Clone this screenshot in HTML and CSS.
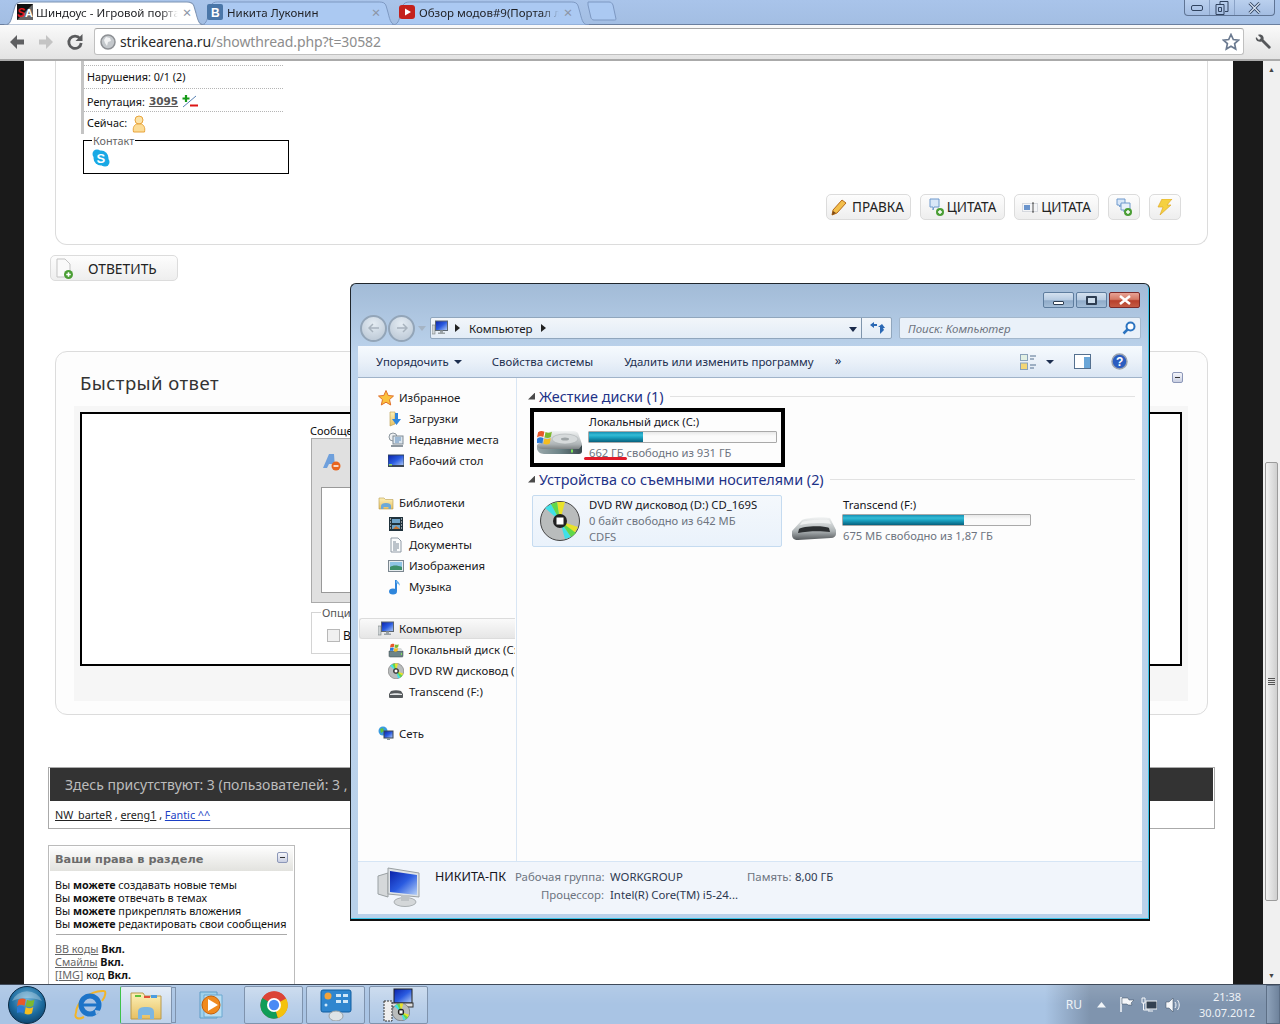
FILE: index.html
```html
<!DOCTYPE html>
<html lang="ru">
<head>
<meta charset="utf-8">
<title>Шиндоус - Игровой портал</title>
<link rel="stylesheet" href="styles.css">
</head>
<body>
<svg class="defs" aria-hidden="true">
  <defs>
    <linearGradient id="gSilver" x1="0" y1="0" x2="0" y2="1"><stop offset="0" stop-color="#f2f4f4"/><stop offset=".6" stop-color="#aeb4b6"/><stop offset="1" stop-color="#55595c"/></linearGradient>
    <linearGradient id="gBlue" x1="0" y1="0" x2="1" y2="1"><stop offset="0" stop-color="#0b22a8"/><stop offset=".5" stop-color="#2a5be0"/><stop offset="1" stop-color="#b6d0f7"/></linearGradient>
    <linearGradient id="gFolder" x1="0" y1="0" x2="0" y2="1"><stop offset="0" stop-color="#fdf1b8"/><stop offset="1" stop-color="#e6bf62"/></linearGradient>
    <linearGradient id="gHddSide" x1="0" y1="0" x2="1" y2="0"><stop offset="0" stop-color="#9aa8ab"/><stop offset=".5" stop-color="#6d8488"/><stop offset="1" stop-color="#39474b"/></linearGradient>
    <radialGradient id="gOrb" cx=".5" cy=".35" r=".7"><stop offset="0" stop-color="#6fb2d8"/><stop offset=".6" stop-color="#1d6c9f"/><stop offset="1" stop-color="#0c3e66"/></radialGradient>
    <symbol id="flagwin" viewBox="0 0 16 16">
      <path d="M1 4c2-1.500 4-1.500 6-.5l-1 5c-2-1-4-1-6 .5z" fill="#e8582a"/><path d="M8 3.800c2 1 4 1 6-.3l-1 5c-2 1.300-4 1.300-6 .3z" fill="#7cb82f"/><path d="M0 10c2-1.500 4-1.500 6-.5l-1 5c-2-1-4-1-6 .5z" fill="#2a7ad8"/><path d="M7 9.800c2 1 4 1 6-.3l-1 5c-2 1.300-4 1.300-6 .3z" fill="#f5bd1f"/>
    </symbol>
    <symbol id="hdd" viewBox="0 0 48 32">
      <path d="M2 19L14 6c1-1 2-1 4-1h21c2 0 3 1 4 2l4 11v6c0 2-1 3-3 3H9c-4 0-7-3-7-6z" fill="url(#gSilver)"/>
      <path d="M2 20c1 2 3 3 6 3h36l3-4v6c0 2-1 3-3 3H9c-4 0-7-3-7-6z" fill="url(#gHddSide)"/>
      <path d="M36 23.500h2v3h-2z" fill="#7fe35c"/>
      <ellipse cx="30" cy="13" rx="13" ry="5" fill="#d6dadb" stroke="#a2a8aa" stroke-width=".5"/>
      <ellipse cx="30" cy="13" rx="4" ry="1.500" fill="#9ea4a6"/>
      <use href="#flagwin" x="2" y="2" width="17" height="17"/>
    </symbol>
    <symbol id="usb" viewBox="0 0 48 28">
      <path d="M2 17L12 6c3-2 20-4 28-2l6 12v4c0 2-2 4-5 4L8 26c-4 0-6-2-6-5z" fill="url(#gSilver)"/>
      <path d="M9 15c2-3 25-4 30-1l1 4c-9-1-22-1-32 1z" fill="#2c2f31"/>
      <path d="M12 8c6-2 22-3 27-2l2 4c-6-2-25-1-31 1z" fill="#eef0f0"/>
    </symbol>
    <symbol id="cd" viewBox="0 0 40 40">
      <circle cx="20" cy="20" r="19.500" fill="#b9bcbc" stroke="#444"/>
      <path d="M20 20L17 1h8zM20 20L38 26l-4 7z" fill="#e8e22a"/>
      <path d="M20 20L5 7l6-4zM20 20L25 38l6-2z" fill="#3fe0e8"/>
      <path d="M20 20L11 3l6-2zM20 20L31 36l5-4z" fill="#61d84a"/>
      <circle cx="20" cy="20" r="7" fill="#222"/><rect x="16.500" y="16.500" width="7" height="7" fill="#fff"/>
    </symbol>
    <symbol id="pc" viewBox="0 0 16 16">
      <rect x="0" y="5" width="3" height="9" fill="#cfd4d6" stroke="#7a8083" stroke-width=".6"/>
      <rect x="3.500" y="1" width="12" height="9.500" fill="url(#gBlue)" stroke="#5c6670"/>
      <path d="M8 10.500h3v2h2v1.500H6v-1.500h2z" fill="#9aa2a6"/>
    </symbol>
    <symbol id="star" viewBox="0 0 16 16"><path d="M8 .5l2.200 5 5.300.5-4 3.600 1.200 5.400L8 12.200 3.300 15l1.200-5.400-4-3.600 5.300-.5z" fill="#fbc23e" stroke="#e0702a"/></symbol>
    <symbol id="folder" viewBox="0 0 16 16"><path d="M1 3h5l1.500 1.500H15V14H1z" fill="url(#gFolder)" stroke="#b99a4c" stroke-width=".6"/><path d="M3 14v-3c0-2 2-3 5-3s5 1 5 3v3h-2.500v-2h-5v2z" fill="#6aa8d8"/></symbol>
    <symbol id="plus" viewBox="0 0 8 8"><circle cx="4" cy="4" r="4" fill="#4b9e35"/><path d="M2 4h4M4 2v4" stroke="#fff" stroke-width="1.400"/></symbol>
  </defs>
</svg>

<div class="screen">
  <header class="tabstrip">
    <div class="tab tab-active">
      <svg class="tab-bg" viewBox="0 0 200 24" preserveAspectRatio="none"><path d="M0 24C6 24 7 20 9 12L11 5C12 2 14 1 18 1H182C186 1 188 2 189 5L191 12C193 20 194 24 200 24Z" fill="#fff" stroke="#7d93b3"/></svg>
      <svg class="fav" viewBox="0 0 16 16"><rect width="16" height="16" fill="#111"/><path d="M0 16L16 0v16z" fill="#666"/><text x="0" y="13" class="fav-sa">S</text><text x="8" y="13" class="fav-sa2">A</text></svg>
      <span class="tab-text">Шиндоус - Игровой порта</span><span class="tab-x">×</span>
    </div>
    <div class="tab tab-idle">
      <svg class="tab-bg" viewBox="0 0 200 24" preserveAspectRatio="none"><path d="M0 24C6 24 7 20 9 12L11 5C12 2 14 1 18 1H182C186 1 188 2 189 5L191 12C193 20 194 24 200 24Z" fill="#abc9f2" stroke="#7d98c2"/></svg>
      <svg class="fav" viewBox="0 0 16 16"><rect width="16" height="16" rx="2" fill="#4a76a8"/><text x="4" y="12.500" class="fav-vk">В</text></svg>
      <span class="tab-text">Никита Луконин</span><span class="tab-x">×</span>
    </div>
    <div class="tab tab-idle">
      <svg class="tab-bg" viewBox="0 0 200 24" preserveAspectRatio="none"><path d="M0 24C6 24 7 20 9 12L11 5C12 2 14 1 18 1H182C186 1 188 2 189 5L191 12C193 20 194 24 200 24Z" fill="#abc9f2" stroke="#7d98c2"/></svg>
      <svg class="fav" viewBox="0 0 16 16"><rect width="16" height="14" y="1" rx="3" fill="#c4201c"/><path d="M6 4.500l6 3.500-6 3.500z" fill="#fff"/></svg>
      <span class="tab-text">Обзор модов#9(Портал л</span><span class="tab-x">×</span>
    </div>
    <svg class="newtab" viewBox="0 0 30 20"><path d="M1 1h21c2 0 3 1 4 3l3 14c0 1-1 1-2 1H7c-2 0-2-1-3-2L1 4z" fill="#abc9f2" stroke="#7d98c2"/></svg>
    <div class="win-ctrls">
      <span class="wc"><svg width="12" height="6" viewBox="0 0 12 6"><rect x=".5" y=".5" width="11" height="5" rx="1.500" fill="none" stroke="#30435f"/></svg></span>
      <span class="wc wc-mid"><svg width="14" height="14" viewBox="0 0 14 14"><path d="M5 3V.5h8v10h-3M1 3.500h8v10H1zM3.500 6.500h3v4h-3z" fill="none" stroke="#30435f"/></svg></span>
      <span class="wc wc-close"><svg width="13" height="12" viewBox="0 0 13 12"><path d="M1.500 1l10 10M11.500 1l-10 10" stroke="#30435f" stroke-width="3"/><path d="M1.500 1l10 10M11.500 1l-10 10" stroke="#dbe6f5" stroke-width="1.200"/></svg></span>
    </div>
  </header>

  <nav class="toolbar">
    <svg class="tb-ic" viewBox="0 0 18 18"><path d="M9 2L2 9l7 7v-4.500h7v-5H9z" fill="#5f6062"/></svg>
    <svg class="tb-ic" viewBox="0 0 18 18"><path d="M9 2l7 7-7 7v-4.500H2v-5h7z" fill="#c4c4c4"/></svg>
    <svg class="tb-ic" viewBox="0 0 18 18"><path d="M14 5.500A6.200 6.200 0 1 0 15.200 10" fill="none" stroke="#5a5b5d" stroke-width="2.800"/><path d="M16.500 1v7h-7z" fill="#5a5b5d"/></svg>
    <div class="omnibox">
      <svg class="globe" viewBox="0 0 16 16"><circle cx="8" cy="8" r="7" fill="#c4c8cc" stroke="#8d9094" stroke-width="1.500"/><path d="M6 3l4 1 1 3-3 1-1 4-2-3-1-3z" fill="#f2f3f4"/></svg>
      <span class="url"><span class="url-host">strikearena.ru</span>/showthread.php?t=30582</span>
      <svg class="omni-star" viewBox="0 0 18 18"><path d="M9 1.500l2.300 5 5.200.6-3.900 3.500 1.100 5.400L9 13.300 4.300 16l1.100-5.400L1.500 7.100l5.200-.6z" fill="#fff" stroke="#6b7a90" stroke-width="1.700"/></svg>
    </div>
    <svg class="wrench" viewBox="0 0 18 18"><path d="M2 4l3 3 2-2-3-3c3-1.500 6.500 1 5.500 4.500l7 7c1 1-1 3-2 2l-7-7C4 9.500 1 7 2 4z" fill="#55575a"/></svg>
  </nav>

  <div class="viewport">
    <div class="side-black"></div>
    <main class="page">
      <section class="post">
        <div class="userinfo">
          <div class="ui-row ui-first"></div>
          <div class="ui-row ui-up">Нарушения: 0/1 (2)</div>
          <div class="ui-row ui-down"><span>Репутация:</span><a class="rep">3095</a><svg class="repicon" width="17" height="14" viewBox="0 0 17 14"><path d="M4 1v7M.5 4.500h7" stroke="#159a16" stroke-width="2.200"/><path d="M1 13L14 2" stroke="#2b5f9e" stroke-width=".8"/><path d="M8 11.500h8" stroke="#dd1515" stroke-width="2"/></svg></div>
          <div class="ui-row ui-up"><span>Сейчас:</span><svg class="onlineic" width="14" height="18" viewBox="0 0 14 18"><circle cx="7" cy="5" r="4" fill="#fce3a8" stroke="#e8a43c"/><path d="M1.500 17c-1-5 1-7 3-8h5c2 1 4 3 3 8z" fill="#fcdc96" stroke="#e8a43c"/></svg></div>
        </div>
        <fieldset class="contact">
          <legend>Контакт</legend>
          <svg class="skype" width="18" height="18" viewBox="0 0 18 18"><circle cx="5" cy="5" r="4.500" fill="#19a9e5"/><circle cx="13" cy="13" r="4.500" fill="#19a9e5"/><circle cx="9" cy="9" r="7.500" fill="#19a9e5"/><text x="4.500" y="13.500" class="skype-s">S</text></svg>
        </fieldset>
        <div class="post-actions">
          <a class="btn btn-edit"><svg width="16" height="18" viewBox="0 0 16 18"><path d="M1 17l1-5L11 2l4 3-9 10z" fill="#f3bf4c" stroke="#b56a1a"/><path d="M1 17l1-4 3 2z" fill="#7d4a16"/></svg><span>ПРАВКА</span></a>
          <a class="btn btn-q"><svg width="15" height="18" viewBox="0 0 15 18"><path d="M1 1h9v8H5l-1 3V9H1z" fill="#d9e7f8" stroke="#6f99cc"/><use href="#plus" x="7" y="10" width="8" height="8"/></svg><span>ЦИТАТА</span></a>
          <a class="btn btn-q2"><svg width="16" height="12" viewBox="0 0 16 12"><rect x=".5" y="2.500" width="15" height="8" fill="#f4f5f7" stroke="#d5d8de"/><rect x="2" y="4" width="6" height="5" fill="#6a94cc"/><path d="M11 2v9M10 2h2M10 11h2" stroke="#555"/></svg><span>ЦИТАТА</span></a>
          <a class="btn btn-ic"><svg width="16" height="18" viewBox="0 0 16 18"><path d="M1 1h8v6H4v2L3 7H1z" fill="#d9e7f8" stroke="#6f99cc"/><path d="M5 5h9v7H9l-1 2v-2H5z" fill="#e6effa" stroke="#6f99cc"/><use href="#plus" x="8" y="10" width="8" height="8"/></svg></a>
          <a class="btn btn-ic"><svg width="16" height="16" viewBox="0 0 16 16"><path d="M5 0h10L10 6h4L3 16l3-8H1z" fill="#f5d13f" stroke="#e0a92a" stroke-width=".7"/></svg></a>
        </div>
      </section>

      <a class="btn btn-reply"><svg width="17" height="21" viewBox="0 0 17 21"><path d="M1 1h8l5 5v13H1z" fill="#fafafa" stroke="#c3c3c3"/><use href="#plus" x="8" y="12" width="9" height="9"/></svg><span>ОТВЕТИТЬ</span></a>

      <section class="quick">
        <div class="quick-head">
          <h2 class="quick-title">Быстрый ответ</h2>
          <span class="collapse"></span>
        </div>
        <div class="quick-area">
          <div class="quick-box">
            <div class="q-label">Сообщение:</div>
            <div class="editor">
              <div class="ed-tools">
                <svg width="20" height="18" viewBox="0 0 20 18"><path d="M1 15L7 1h5l1 14h-3V11H7l-2 4z" fill="#6fa0dc"/><circle cx="14" cy="13" r="4.500" fill="#e8641e"/><path d="M11.500 13h5" stroke="#fff" stroke-width="1.500"/></svg>
              </div>
              <div class="ed-text"></div>
            </div>
            <fieldset class="options">
              <legend>Опции</legend>
              <label class="opt"><span class="checkbox"></span>Вставить</label>
            </fieldset>
          </div>
        </div>
      </section>

      <section class="online">
        <div class="online-head">Здесь присутствуют: 3 (пользователей: 3 , гостей: 0)</div>
        <div class="online-body"><a class="u">NW_barteR</a> , <a class="u">ereng1</a> , <a class="u u-blue">Fantic ^^</a></div>
      </section>

      <section class="rights">
        <div class="rights-head"><span>Ваши права в разделе</span><span class="collapse"></span></div>
        <div class="rights-body">
          <div>Вы <b>можете</b> создавать новые темы</div>
          <div>Вы <b>можете</b> отвечать в темах</div>
          <div>Вы <b>можете</b> прикреплять вложения</div>
          <div>Вы <b>можете</b> редактировать свои сообщения</div>
          <hr class="rights-hr">
          <div><a class="u u-grey">BB коды</a> <b>Вкл.</b></div>
          <div><a class="u u-grey">Смайлы</a> <b>Вкл.</b></div>
          <div><a class="u u-grey">[IMG]</a> код <b>Вкл.</b></div>
        </div>
      </section>
    </main>
    <div class="side-black side-right"></div>
    <aside class="scrollbar">
      <span class="sb-arrow">▲</span>
      <div class="sb-track"><div class="sb-thumb"><span class="sb-grip"></span></div></div>
      <span class="sb-arrow">▼</span>
    </aside>
  </div>

  <footer class="taskbar">
    <svg class="orb" viewBox="0 0 38 38"><circle cx="19" cy="19" r="18.500" fill="url(#gOrb)" stroke="#0a2a45"/><path d="M4 15a16 15 0 0 1 30 0c-8-4-22-4-30 0z" fill="#fff" opacity=".28"/><use href="#flagwin" x="9" y="9" width="20" height="20"/></svg>
    <svg class="tk-ie" viewBox="0 0 34 34"><path d="M3 25C3 14 18 2 31 3c2 0 2 5-2 10" fill="none" stroke="#f2b52a" stroke-width="2"/><path d="M3 25c-2 5 2 7 8 4" fill="none" stroke="#f2b52a" stroke-width="2"/><circle cx="17" cy="17" r="9" fill="none" stroke="#1d74c8" stroke-width="5"/><path d="M10 17h15" stroke="#1d74c8" stroke-width="3"/><path d="M22 22l6 1-5 4z" fill="#a8c3e2"/></svg>
    <div class="tk-btn tk-active">
      <svg width="32" height="30" viewBox="0 0 32 30"><path d="M1 3h12l2 3h16v23H1z" fill="url(#gFolder)" stroke="#b99a4c"/><path d="M5 5h6v2H5z" fill="#5fc23c"/><path d="M14 6h6v2h-6z" fill="#e0503a"/><path d="M21 5h6v3h-6z" fill="#4b9ce0"/><path d="M8 29v-7c0-4 3-5 8-5s8 1 8 5v7h-4v-4h-8v4z" fill="#7cb6e2"/></svg>
    </div>
    <div class="tk-stack"></div>
    <div class="tk-wmp">
      <svg width="32" height="32" viewBox="0 0 32 32"><path d="M5 3h17v26H5z" fill="#9fd0ea" stroke="#5f9cc6"/><path d="M9 6h18v22H9z" fill="#b8def2" stroke="#6aa8d0"/><circle cx="16" cy="16" r="9" fill="#f08a1e" stroke="#c55f0a"/><path d="M13 10l10 6-10 6z" fill="#fff"/></svg>
    </div>
    <div class="tk-btn">
      <svg width="28" height="28" viewBox="0 0 30 30"><circle cx="15" cy="15" r="14.500" fill="#db4437"/><path d="M15 15L28 8a14.500 14.500 0 0 1-9 21z" fill="#f4c20d"/><path d="M15 15l4 14A14.500 14.500 0 0 1 2.500 7.500z" fill="#0f9d58"/><path d="M2.500 7.500A14.500 14.500 0 0 1 28 8H15z" fill="#db4437"/><circle cx="15" cy="15" r="6.500" fill="#4a8af4" stroke="#fff" stroke-width="2"/></svg>
    </div>
    <div class="tk-btn">
      <svg width="32" height="32" viewBox="0 0 32 32"><rect x="1" y="1" width="30" height="22" rx="2" fill="#2f86cf" stroke="#135f9f"/><circle cx="8" cy="7" r="3.500" fill="#f2a33a"/><path d="M16 5h5v3h-5zM23 5h5v3h-5zM16 11h5v3h-5zM23 11h5v3h-5z" fill="#cfe7f8"/><circle cx="6" cy="16" r="1.500" fill="#cfe7f8"/><ellipse cx="16" cy="27" rx="7" ry="5" fill="#dfe3e6" stroke="#9aa2a6"/></svg>
    </div>
    <div class="tk-btn tk-last">
      <svg width="32" height="34" viewBox="0 0 32 34"><rect x="11" y="1" width="18" height="14" fill="url(#gBlue)" stroke="#222"/><rect x="8" y="15" width="22" height="4" fill="#ddd" stroke="#333"/><path d="M1 13h8v20H1z" fill="#eee" stroke="#333" stroke-dasharray="2 1"/><use href="#cd" x="9" y="15" width="18" height="18"/></svg>
    </div>
    <div class="tray">
      <span class="lang">RU</span>
      <svg class="tr-up" width="9" height="6" viewBox="0 0 9 6"><path d="M4.500 0L9 5.500H0z" fill="#f2f5f8"/></svg>
      <svg class="tr-flag" width="16" height="17" viewBox="0 0 16 17"><path d="M2 1v15" stroke="#f5f7fa" stroke-width="1.500"/><path d="M3 2h6l1 2h5l-3 3 1 2H9L8 8H3z" fill="#f5f7fa" stroke="#39485c" stroke-width=".5"/></svg>
      <svg class="tr-net" width="16" height="16" viewBox="0 0 16 16"><rect x="5" y="4" width="11" height="8" fill="#33404f" stroke="#f5f7fa"/><path d="M1 1h3v5H1zM2.500 6v7h6M7 14h5" stroke="#f5f7fa" fill="none"/></svg>
      <svg class="tr-vol" width="16" height="16" viewBox="0 0 16 16"><path d="M1 5h3l4-4v14l-4-4H1z" fill="#f5f7fa" stroke="#39485c" stroke-width=".5"/><path d="M10 5c1.300 1.500 1.300 4.500 0 6M12.500 3c2.300 2.800 2.300 7.200 0 10" fill="none" stroke="#f5f7fa"/></svg>
      <div class="clock"><span>21:38</span><span>30.07.2012</span></div>
      <div class="show-desktop"></div>
    </div>
  </footer>

  <section class="explorer">
    <div class="ex-title">
      <span class="ex-wbtn"><i class="ic-min"></i></span>
      <span class="ex-wbtn"><i class="ic-max"></i></span>
      <span class="ex-wbtn ex-close"><svg width="14" height="10" viewBox="0 0 14 10"><path d="M2 1l10 8M12 1L2 9" stroke="#fff" stroke-width="2.500"/></svg></span>
    </div>
    <div class="ex-nav">
      <div class="ex-circles">
        <span class="ex-circle"><svg width="12" height="10" viewBox="0 0 12 10"><path d="M5 1L1 5l4 4M1 5h10" stroke="#a8b3be" stroke-width="1.500" fill="none"/></svg></span>
        <span class="ex-circle"><svg width="12" height="10" viewBox="0 0 12 10"><path d="M7 1l4 4-4 4M11 5H1" stroke="#a8b3be" stroke-width="1.500" fill="none"/></svg></span>
        <span class="ex-drop"></span>
      </div>
      <div class="ex-addr">
        <svg class="ic16" viewBox="0 0 16 16"><use href="#pc"/></svg>
        <span class="crumb-arrow"></span>
        <span class="crumb">Компьютер</span>
        <span class="crumb-arrow"></span>
        <span class="addr-drop"></span>
        <span class="addr-refresh"><svg width="16" height="14" viewBox="0 0 16 14"><path d="M1 4l4-3v2h3v2H5v2zM15 9l-4 4v-7h-2l4-3 3 4h-2z" fill="#2a68b4"/></svg></span>
      </div>
      <div class="ex-search">
        <span>Поиск: Компьютер</span>
        <svg width="14" height="14" viewBox="0 0 14 14"><circle cx="8.500" cy="5.500" r="4" fill="#fff" stroke="#2c74c0" stroke-width="2"/><path d="M5.500 8.500L1.500 12.500" stroke="#2c74c0" stroke-width="2.500"/></svg>
      </div>
    </div>
    <div class="ex-body">
      <div class="ex-tools">
        <span class="t-first">Упорядочить</span><span class="t-caret"></span>
        <span class="t-item">Свойства системы</span>
        <span class="t-item">Удалить или изменить программу</span>
        <span class="t-more">»</span>
        <svg class="t-view" width="16" height="16" viewBox="0 0 16 16"><rect x=".5" y=".5" width="7" height="6" fill="#e2f0e4" stroke="#8aa2ba"/><rect x=".5" y="9" width="7" height="6.500" fill="#f3d676" stroke="#8aa2ba"/><path d="M10 2h6M10 5h4M10 11h6M10 14h4" stroke="#54708f"/></svg>
        <span class="t-caret t-caret2"></span>
        <svg class="t-pane" width="17" height="15" viewBox="0 0 17 15"><rect x=".5" y=".5" width="16" height="14" fill="#fff" stroke="#54708f"/><rect x="10" y="3" width="6" height="11" fill="#6aa6d8"/></svg>
        <svg class="t-help" width="17" height="17" viewBox="0 0 17 17"><circle cx="8.500" cy="8.500" r="7.500" fill="#2a5cc0" stroke="#9aa2ae" stroke-width="1.500"/><text x="5" y="13" class="help-q">?</text></svg>
      </div>
      <div class="ex-mid">
        <div class="ex-side">
          <div class="nav-group">
            <div class="nav-head"><svg class="ic16" viewBox="0 0 16 16"><use href="#star"/></svg>Избранное</div>
            <div class="nav-item"><svg class="ic16" viewBox="0 0 16 16"><path d="M2 1h5v12L2 15z" fill="url(#gFolder)" stroke="#b99a4c" stroke-width=".6"/><path d="M7 2h3v6h3l-4.500 6L4 8h3z" fill="#2f86dc"/></svg>Загрузки</div>
            <div class="nav-item"><svg class="ic16" viewBox="0 0 16 16"><circle cx="5" cy="5" r="4" fill="#eef0f2" stroke="#8d979f"/><rect x="5" y="4" width="10" height="8" fill="#dce6ee" stroke="#7e8a94"/><path d="M7 6h6M7 8h6M7 10h4" stroke="#5f8cbc"/><path d="M3 14h12" stroke="#8d979f" stroke-width="2"/></svg>Недавние места</div>
            <div class="nav-item"><svg class="ic16" viewBox="0 0 16 16"><rect y="2" width="16" height="11" fill="url(#gBlue)" stroke="#30455f"/><rect y="12" width="16" height="2" fill="#3b4654"/><rect x="1" y="11" width="3" height="1.500" fill="#8fdc6a"/></svg>Рабочий стол</div>
          </div>
          <div class="nav-group">
            <div class="nav-head"><svg class="ic16" viewBox="0 0 16 16"><use href="#folder"/></svg>Библиотеки</div>
            <div class="nav-item"><svg class="ic16" viewBox="0 0 16 16"><rect x="1" y="1" width="14" height="14" fill="#20323c"/><path d="M4 3h8v4H4zM4 9h8v4H4z" fill="#6ea3c8"/><path d="M5 13l3-3 4 3z" fill="#c7742e"/><path d="M2 3h1M2 6h1M2 9h1M2 12h1M13 3h1M13 6h1M13 9h1M13 12h1" stroke="#fff"/></svg>Видео</div>
            <div class="nav-item"><svg class="ic16" viewBox="0 0 16 16"><path d="M3 1h7l3 3v11H3z" fill="#fbfcfd" stroke="#8f9aa5"/><path d="M5 5h3M5 7h6M5 9h6M5 11h6M5 13h4" stroke="#7c8a98"/></svg>Документы</div>
            <div class="nav-item"><svg class="ic16" viewBox="0 0 16 16"><rect x=".5" y="2.500" width="15" height="11" fill="#e6ecef" stroke="#7b868f"/><rect x="2" y="4" width="12" height="8" fill="#8fc4e4"/><path d="M2 9c3-2 7-2 12 0v3H2z" fill="#3d8f6a"/></svg>Изображения</div>
            <div class="nav-item"><svg class="ic16" viewBox="0 0 16 16"><path d="M8 1v11" stroke="#2f86dc" stroke-width="2"/><path d="M8 1c2 1 4 3 4 6-1-2-2-2-4-3z" fill="#6ab0ec"/><ellipse cx="5" cy="12.500" rx="4" ry="3" fill="#2f86dc"/></svg>Музыка</div>
          </div>
          <div class="nav-group">
            <div class="nav-head nav-selected"><svg class="ic16" viewBox="0 0 16 16"><use href="#pc"/></svg>Компьютер</div>
            <div class="nav-item"><svg class="ic16" viewBox="0 0 16 16"><path d="M1 9h14v5c0 1-1 1-1 1H2c-1 0-1-1-1-1z" fill="#6d8488" stroke="#39474b" stroke-width=".5"/><path d="M13 11h1v2h-1z" fill="#7fe35c"/><path d="M2 9l2-3h9l2 3z" fill="#d6dadb"/><use href="#flagwin" x="2" y="0" width="10" height="10"/></svg>Локальный диск (C:)</div>
            <div class="nav-item"><svg class="ic16" viewBox="0 0 16 16"><use href="#cd"/></svg>DVD RW дисковод (D:) CD_169S</div>
            <div class="nav-item"><svg class="ic16" viewBox="0 0 16 16"><path d="M1 10l2-3c3-1 7-1 10 0l2 3v3c0 1-1 1-1 1H2c-1 0-1-1-1-1z" fill="#55595c"/><path d="M2 10c3-1 9-1 12 0v1H2z" fill="#e3e5e6"/></svg>Transcend (F:)</div>
          </div>
          <div class="nav-group">
            <div class="nav-head"><svg class="ic16" viewBox="0 0 16 16"><circle cx="5" cy="5" r="4.500" fill="#3a9be0"/><path d="M2 3l3-1 1 3-3 2z" fill="#5fc23c"/><rect x="6" y="5" width="9" height="7" fill="url(#gBlue)" stroke="#3b4654"/><path d="M9 12h3v2H9z" fill="#8a949c"/></svg>Сеть</div>
          </div>
        </div>
        <div class="ex-main">
          <div class="grp-head"><span class="grp-tri"></span><span class="grp-name">Жесткие диски (1)</span><span class="grp-line"></span></div>
          <div class="disk-marked">
            <svg class="disk-ic" width="48" height="32" viewBox="0 0 48 32"><use href="#hdd"/></svg>
            <div class="disk-info">
              <div class="d-name">Локальный диск (C:)</div>
              <div class="bar"><div class="fill fill-c"></div></div>
              <div class="d-sub">662 ГБ свободно из 931 ГБ</div>
            </div>
            <span class="red-line"></span>
          </div>
          <div class="grp-head grp-two"><span class="grp-tri"></span><span class="grp-name">Устройства со съемными носителями (2)</span><span class="grp-line"></span></div>
          <div class="dev-row">
            <div class="dev-dvd">
              <svg width="40" height="40" viewBox="0 0 40 40"><use href="#cd"/></svg>
              <div class="dvd-info">
                <div class="d-name">DVD RW дисковод (D:) CD_169S</div>
                <div class="d-sub">0 байт свободно из 642 МБ</div>
                <div class="d-sub">CDFS</div>
              </div>
            </div>
            <div class="dev-usb">
              <svg class="usb-ic" width="48" height="28" viewBox="0 0 48 28"><use href="#usb"/></svg>
              <div class="disk-info">
                <div class="d-name">Transcend (F:)</div>
                <div class="bar"><div class="fill fill-f"></div></div>
                <div class="d-sub">675 МБ свободно из 1,87 ГБ</div>
              </div>
            </div>
          </div>
        </div>
      </div>
      <div class="ex-status">
        <svg class="st-ic" width="44" height="40" viewBox="0 0 44 40"><path d="M1 9l10-3v24L1 27z" fill="#d5d8da" stroke="#9aa0a3"/><path d="M11 1l31 5v24l-31-3z" fill="#dfe3e6" stroke="#9aa0a3"/><path d="M13 4l27 4v20l-27-3z" fill="url(#gBlue)"/><ellipse cx="28" cy="35" rx="11" ry="4.500" fill="#d4d7d9" stroke="#a8adb0"/><path d="M24 28h8v6h-8z" fill="#bfc3c6"/></svg>
        <div class="st-grid">
          <span class="st-name">НИКИТА-ПК</span>
          <span class="st-label">Рабочая группа:</span>
          <span class="st-val st-wide">WORKGROUP</span>
          <span class="st-label">Память:</span>
          <span class="st-val">8,00 ГБ</span>
          <span></span>
          <span class="st-label">Процессор:</span>
          <span class="st-val">Intel(R) Core(TM) i5-24...</span>
        </div>
      </div>
    </div>
  </section>
</div>
</body>
</html>
```

FILE: styles.css
```css
* { box-sizing: border-box; }
html, body { margin: 0; padding: 0; }
body { width: 1280px; height: 1024px; overflow: hidden; font-family: "Noto Sans", "Liberation Sans", sans-serif; background: #fff; }
.defs { position: absolute; width: 0; height: 0; }
.screen { position: relative; width: 1280px; height: 1024px; display: flex; flex-direction: column; overflow: hidden; }

/* Browser tabs */
.tabstrip { height: 25px; flex: none; display: flex; align-items: flex-end; padding-left: 4px; position: relative; background: linear-gradient(#a9c4ea, #a3bee3); border-bottom: 1px solid #6a7f9f; }
.tab { position: relative; height: 24px; width: 197px; margin-left: -5px; margin-bottom: -1px; display: flex; align-items: center; padding: 0 12px 2px 7px; font-size: 11.500px; color: #1f2024; }
.tab:first-child { margin-left: 0; width: 201px; padding: 0 9px 2px 13px; }
.tab-active { z-index: 2; }
.tab-bg { position: absolute; left: 0; top: 0; width: 100%; height: 100%; }
.fav { position: relative; width: 16px; height: 16px; flex: none; margin-right: 4px; }
.tab:first-child .fav { margin-right: 3px; }
.fav-sa { font: italic bold 12px "Liberation Sans", sans-serif; fill: #e2141c; }
.fav-sa2 { font: bold 11px "Liberation Sans", sans-serif; fill: #fff; }
.fav-vk { font: bold 12px "Liberation Sans", sans-serif; fill: #fff; }
.tab-text { position: relative; flex: 1; min-width: 0; white-space: nowrap; -webkit-mask-image: linear-gradient(90deg, #000 88%, transparent); mask-image: linear-gradient(90deg, #000 88%, transparent); }
.tab-x { position: relative; width: 18px; flex: none; font-size: 15px; line-height: 16px; color: #8b95a5; text-align: center; }
.newtab { width: 30px; height: 20px; margin-left: -2px; margin-bottom: 3px; flex: none; }
.win-ctrls { margin-left: auto; margin-right: 5px; align-self: flex-start; width: 91px; height: 16px; display: flex; border: 1px solid #5f7494; border-top: 0; border-radius: 0 0 4px 4px; background: linear-gradient(#bad0ee, #a4bde2); }
.wc { flex: 25; display: flex; align-items: center; justify-content: center; }
.wc-mid { border-left: 1px solid #8aa2c6; border-right: 1px solid #8aa2c6; }
.wc-close { flex: 41; }

/* Browser toolbar */
.toolbar { height: 36px; flex: none; display: flex; align-items: center; padding-left: 8px; background: linear-gradient(#fafafa, #e3e3e3); border-bottom: 2px solid #aaa; padding-bottom: 1px; }
.tb-ic { width: 18px; height: 18px; flex: none; margin-right: 11px; }
.omnibox { margin-left: -1px; width: 1150px; height: 27px; display: flex; align-items: center; padding: 0 3px 0 5px; background: #fff; border: 1px solid #c0c0c0; border-top-color: #a5a5a5; border-radius: 3px; }
.globe { width: 16px; height: 16px; margin-right: 4px; flex: none; }
.url { flex: 1; font-size: 14px; color: #8d8d8d; white-space: nowrap; letter-spacing: -.1px; }
.url-host { color: #2a2a2a; }
.omni-star { width: 18px; height: 18px; flex: none; }
.wrench { width: 18px; height: 18px; margin-left: 10px; flex: none; }

/* Viewport */
.viewport { flex: none; height: 923px; display: flex; background: #fff; }
.side-black { width: 24px; flex: none; background: #1a1a1a; }
.side-right { width: 30px; }
.page { width: 1209px; flex: none; height: 923px; overflow: hidden; font-size: 10.800px; color: #111; display: flex; flex-direction: column; align-items: flex-start; }

/* Post */
.post { width: 1153px; height: 184px; margin-left: 31px; flex: none; padding-left: 26px; border: 1px solid #dcdcdc; border-top: 0; border-radius: 0 0 12px 12px; }
.userinfo { width: 202px; height: 73px; border-left: 3px solid #c4c4c4; margin-left: -1px; }
.ui-row { height: 23px; padding-left: 3px; display: flex; align-items: center; border-top: 1px dotted #b5b5b5; white-space: nowrap; }
.ui-first { height: 4px; border-top: 0; }
.ui-up { padding-bottom: 2px; }
.ui-down { padding-top: 2px; }
.rep { margin-left: 4px; font: bold 10.500px "DejaVu Sans", sans-serif; color: #555; text-decoration: underline; }
.repicon { margin-left: 4px; }
.onlineic { margin-left: 5px; margin-top: 3px; }
.contact { width: 206px; height: 40px; margin: 0 0 0 1px; padding: 0 0 0 8px; border: 1px solid #000; display: block; }
.contact legend { padding: 0 1px; font-size: 10.800px; line-height: 13px; color: #666; }
.skype { display: block; margin-top: 2px; }
.skype-s { font: bold 13px "Liberation Sans", sans-serif; fill: #fff; }
.help-q { font: bold 12px "Liberation Sans", sans-serif; fill: #fff; }
.post-actions { display: flex; justify-content: flex-end; gap: 9px; margin-top: 20px; padding-right: 26px; }
.btn { height: 26px; display: flex; align-items: center; justify-content: center; gap: 6px; border: 1px solid #dcdcdc; border-radius: 5px; background: linear-gradient(#fdfdfd, #eeeeee); font-size: 13.500px; color: #222; }
.post-actions .btn span { margin-bottom: 1px; }
.post-actions .btn { width: 85px; padding: 0; }
.post-actions .btn-edit { justify-content: flex-start; padding-left: 4px; gap: 5px; }
.post-actions .btn-q { gap: 3px; }
.post-actions .btn-q2 { gap: 3px; }
.post-actions .btn-ic { width: 32px; }
.btn-reply { width: 128px; margin: 10px 0 0 26px; flex: none; justify-content: flex-start; padding-left: 5px; gap: 15px; font-size: 13.800px; }

/* Quick reply */
.quick { width: 1153px; height: 364px; margin: 70px 0 0 31px; flex: none; border: 1px solid #dcdcdc; border-radius: 12px; background: #fdfdfd; }
.quick-head { height: 54px; display: flex; justify-content: space-between; align-items: flex-start; padding: 19px 24px 0 24px; }
.quick-title { margin: 0; font-size: 18.500px; font-weight: 400; line-height: 23px; letter-spacing: .45px; color: #333; }
.collapse { width: 11px; height: 11px; flex: none; border: 1px solid #8c97b8; border-radius: 2px; background: linear-gradient(#f5f6fa, #c9cfe2); display: flex; align-items: center; justify-content: center; }
.collapse::before { content: ""; width: 5px; height: 1px; background: #333; }
.quick-head .collapse { margin-top: 1px; }
.quick-area { width: 1114px; height: 295px; margin-left: 18px; padding: 6px; background: #f6f6f6; }
.quick-box { width: 1102px; height: 254px; border: 2px solid #000; background: #fff; padding: 9px 0 0 228px; font-size: 11px; }
.q-label { font-size: 11px; line-height: 15px; }
.editor { margin-left: 1px; width: 620px; height: 165px; padding-left: 9px; background: #e0e0e0; border: 1px solid #aaa; border-width: 1px 0 1px 1px; }
.ed-tools { height: 48px; padding: 14px 0 0 1px; }
.ed-text { height: 106px; background: #fff; border: 1px solid #999; }
.options { margin: 3px 0 0 1px; padding: 8px 0 0 15px; width: 620px; height: 48px; border: 1px solid #d4d4d4; }
.options legend { padding: 0 1px; margin-left: -6px; line-height: 13px; color: #555; }
.opt { display: flex; align-items: center; gap: 3px; font-size: 12px; }
.checkbox { width: 13px; height: 13px; border: 1px solid #b8b8b8; background: #f0f0f0; }

/* Online */
.online { width: 1167px; height: 62px; margin: 52px 0 0 24px; flex: none; padding: 0 1px; border: 1px solid #aaa; }
.online-head { height: 33px; padding-left: 15px; line-height: 34px; background: #333; color: #bcbcbc; font-size: 14px; white-space: nowrap; }
.online-body { padding: 6px 0 0 5px; line-height: 15px; font-size: 10.800px; }
.u { text-decoration: underline; color: #222; }
.u-blue { color: #1c3fc4; }
.u-grey { color: #666; }

/* Rights */
.rights { width: 247px; height: 160px; margin: 16px 0 0 24px; flex: none; padding: 1px; border: 1px solid #bbb; }
.rights-head { height: 24px; display: flex; justify-content: space-between; align-items: center; padding: 0 5px 0 5px; background: linear-gradient(#fdfdfd, #e2e2de); font: bold 11.300px "DejaVu Sans", sans-serif; color: #6b6b6b; }
.rights-head .collapse { margin-top: -4px; }
.rights-body { padding: 7px 0 0 5px; line-height: 13px; font-size: 10.800px; color: #111; white-space: nowrap; }
.rights-hr { margin: 4px 6px 7px 1px; border: 0; border-top: 1px solid #aaa; }

/* Scrollbar */
.scrollbar { width: 17px; flex: none; background: #f0f0f0; display: flex; flex-direction: column; align-items: center; }
.sb-arrow { height: 17px; font-size: 7px; line-height: 17px; color: #444; flex: none; }
.sb-track { flex: 1; width: 100%; padding: 384px 2px 0 2px; }
.sb-thumb { height: 439px; border: 1px solid #9b9b9b; border-radius: 2px; background: linear-gradient(90deg, #f2f2f2, #cfcfcf); display: flex; align-items: center; justify-content: center; }
.sb-grip { width: 7px; height: 7px; background: repeating-linear-gradient(#555 0 1px, transparent 1px 2px); }

/* Taskbar */
.taskbar { height: 40px; flex: none; display: flex; align-items: center; border-top: 1px solid #3f4a5a; background: linear-gradient(180deg, rgba(255,255,255,.12), rgba(255,255,255,0) 50%), linear-gradient(90deg, #a9c4e4 0, #a9c4e4 1045px, #7f94ae 1090px, #7f94ae 100%); }
.orb { width: 38px; height: 38px; margin-left: 8px; flex: none; }
.tk-ie { width: 34px; height: 34px; margin-left: 27px; flex: none; }
.tk-btn { width: 59px; height: 38px; flex: none; margin-left: 3px; display: flex; align-items: center; justify-content: center; border: 1px solid #7f93ad; border-radius: 2px; background: linear-gradient(rgba(255,255,255,.35), rgba(255,255,255,.08)); }
.tk-active { width: 52px; margin-left: 13px; border-left-color: #3fc24a; background: linear-gradient(rgba(255,255,255,.65), rgba(255,255,255,.25)); }
.tk-stack { width: 4px; height: 36px; flex: none; border: 1px solid #7f93ad; border-left: 0; }
.tk-wmp { width: 59px; flex: none; display: flex; justify-content: center; margin-left: 5px; margin-right: 4px; }
.tk-wmp + .tk-btn { margin-left: 0; }
.tk-last { margin-left: 4px; }
.tray { margin-left: auto; height: 39px; display: flex; align-items: center; color: #eef2f6; font-size: 12px; }
.lang { margin-right: 15px; }
.tr-flag { margin-left: 13px; }
.tr-net { margin-left: 6px; }
.tr-vol { margin-left: 8px; }
.clock { width: 74px; margin-left: 9px; display: flex; flex-direction: column; align-items: center; line-height: 16px; font-size: 11px; }
.show-desktop { width: 14px; height: 39px; margin-left: 2px; border: 1px solid #5d6f86; background: linear-gradient(90deg, #8ea2ba, #6f839c); }

/* Explorer window (a window on the desktop) */
.explorer { position: absolute; left: 350px; top: 283px; width: 800px; height: 638px; padding: 0 7px 6px 7px; border: 1px solid #20262c; border-right-color: #111; border-bottom: 2px solid #111; border-radius: 6px 6px 0 0; box-shadow: inset -1px -1px 0 #39c3e8; background: linear-gradient(#a2bbd7 0, #bcd3ec 70px, #b9d1ea 100%); display: flex; flex-direction: column; font-size: 11.400px; color: #1a1a22; }
.ex-title { height: 33px; flex: none; display: flex; justify-content: flex-end; gap: 2px; padding: 8px 2px 0 0; }
.ex-wbtn { width: 31px; height: 16px; display: flex; align-items: center; justify-content: center; border: 1px solid #5e7d9e; border-radius: 2px; background: linear-gradient(#d4e1ef 0, #b6cbe2 50%, #8fabc9 55%, #a4bdd7 100%); }
.ex-close { border-color: #7a2a2a; background: linear-gradient(#e8a294 0, #d47a66 45%, #b8402c 55%, #c45b44 100%); }
.ic-min { width: 11px; height: 4px; border: 1px solid #2e3e52; background: #fff; border-radius: 1px; margin-top: 5px; }
.ic-max { width: 11px; height: 9px; border: 2px solid #2e3e52; border-radius: 1px; background: #cdddec; }
.ex-nav { height: 22px; flex: none; display: flex; align-items: center; }
.ex-circles { width: 70px; margin-left: 2px; display: flex; align-items: center; flex: none; }
.ex-circle { width: 27px; height: 27px; margin-right: 1px; flex: none; display: flex; align-items: center; justify-content: center; border: 2px solid #93a5b8; border-radius: 50%; background: radial-gradient(circle at 50% 30%, #e4ecf3, #b7c4d2); }
.ex-drop { width: 0; height: 0; margin-left: 2px; border: 4px solid transparent; border-top: 5px solid #a5b4c4; margin-top: 5px; }
.ex-addr { width: 462px; height: 22px; flex: none; display: flex; align-items: center; padding-left: 1px; border: 1px solid #90a6bd; border-radius: 2px; background: linear-gradient(#f2f6fa, #e2ecf6); }
.ic16 { width: 16px; height: 16px; flex: none; }
.crumb { margin: 0 1px 0 1px; font-size: 11.500px; }
.crumb-arrow { width: 0; height: 0; margin: 0 8px 0 7px; border: 4px solid transparent; border-left: 5px solid #222; border-right: 0; }
.addr-drop { width: 0; height: 0; margin-left: auto; margin-right: 4px; border: 4px solid transparent; border-top: 5px solid #1a2a4a; border-bottom: 0; margin-top: 2px; }
.addr-refresh { width: 30px; height: 20px; display: flex; align-items: center; justify-content: center; border-left: 1px solid #7f95ac; }
.ex-search { width: 242px; height: 22px; margin-left: 7px; flex: none; display: flex; align-items: center; justify-content: space-between; padding: 0 4px 0 8px; border: 1px solid #a3b7cc; border-radius: 2px; background: #eaf1f9; font-style: italic; font-size: 11.500px; color: #6d7480; }
.ex-body { width: 784px; height: 568px; flex: none; margin-top: 7px; display: flex; flex-direction: column; background: #fdfdfd; }
.ex-tools { height: 32px; flex: none; display: flex; align-items: center; padding-left: 18px; color: #1d2f50; background: linear-gradient(#f6fafe, #eaf1f9 50%, #d9e5f3); border-bottom: 1px solid #a0b3c9; }
.t-first { margin-right: 5px; }
.t-caret { width: 0; height: 0; border: 4px solid transparent; border-top: 4px solid #1d2f50; border-bottom: 0; }
.t-item { margin-left: 31px; }
.t-first + .t-caret + .t-item { margin-left: 30px; }
.t-more { margin-left: 21px; font-size: 13px; line-height: 14px; margin-top: -4px; }
.t-view { margin-left: auto; }
.t-caret2 { margin-left: 10px; }
.t-pane { margin-left: 20px; }
.t-help { margin-left: 20px; margin-right: 14px; }
.ex-mid { flex: 1; min-height: 0; display: flex; }
.ex-side { width: 159px; flex: none; padding: 9px 0 0 1px; overflow: hidden; border-right: 1px solid #d9e6f4; }
.nav-group { margin: 0 1px 21px 0; }
.nav-head, .nav-item { height: 21px; display: flex; align-items: center; gap: 5px; white-space: nowrap; font-size: 11.400px; overflow: hidden; }
.nav-head { padding-left: 19px; }
.nav-item { padding-left: 29px; }
.nav-selected { border: 1px solid #dcdcdc; border-right: 0; border-radius: 3px 0 0 3px; background: linear-gradient(#fafafa, #e6e6e6); padding-left: 18px; }
.ex-main { flex: 1; padding: 8px 7px 0 11px; min-width: 0; }
.grp-head { height: 20px; display: flex; align-items: center; color: #1e3287; font-size: 14.400px; }
.grp-two { margin-top: 2px; }
.grp-tri { width: 7px; height: 7px; margin-right: 4px; background: #4a4a4a; clip-path: polygon(100% 0, 100% 100%, 0 100%); }
.grp-name { white-space: nowrap; }
.grp-line { flex: 1; height: 1px; margin-left: 6px; background: #e2e2e2; }
.disk-marked { position: relative; width: 255px; height: 59px; margin: 2px 0 0 2px; display: flex; align-items: center; padding-left: 1px; border: 4px solid #000; background: #fdfdfd; }
.disk-ic { flex: none; margin: 8px 5px 0 0; }
.disk-info { width: 189px; flex: none; }
.d-name, .d-sub { font-size: 11.300px; line-height: 16px; white-space: nowrap; }
.d-name { color: #15151d; padding-left: 1px; }
.d-sub { color: #6d7480; padding-left: 1px; font-size: 11.200px; }
.bar { height: 12px; margin: 1px 0 2px; border: 1px solid #a9a9a9; border-radius: 1px; background: linear-gradient(#e8e8e8, #fafafa 40%); }
.fill { height: 100%; background: linear-gradient(#1690b4, #34bcd6 30%, #1aa0bf 55%, #07617e); }
.fill-c { width: 29%; }
.fill-f { width: 64.500%; }
.red-line { position: absolute; left: 50px; top: 45px; width: 43px; height: 3px; border-radius: 2px; background: #e21c2a; }
.dev-row { margin: 6px 0 0 4px; display: flex; align-items: flex-start; }
.dev-dvd { width: 250px; height: 52px; flex: none; display: flex; align-items: center; gap: 8px; padding-left: 7px; border: 1px solid #c5dbf0; border-radius: 2px; background: linear-gradient(#f4f8fc, #eaf2fb); }
.dev-usb { display: flex; align-items: flex-start; margin-left: 8px; padding-top: 2px; }
.usb-ic { margin: 17px 4px 0 0; flex: none; }
.ex-status { height: 53px; flex: none; display: flex; padding: 5px 0 0 19px; background: #f1f5fb; border-top: 1px solid #d6e5f5; }
.st-ic { flex: none; }
.st-grid { margin-left: 14px; display: grid; grid-template-columns: 80px 95px 137px 48px auto; grid-auto-rows: 18px; align-items: center; font-size: 11.400px; }
.st-name { font-size: 12.500px; color: #14141c; white-space: nowrap; }
.st-label { color: #6d7480; text-align: right; padding-right: 6px; white-space: nowrap; }
.st-val { color: #2d3850; white-space: nowrap; }
```
